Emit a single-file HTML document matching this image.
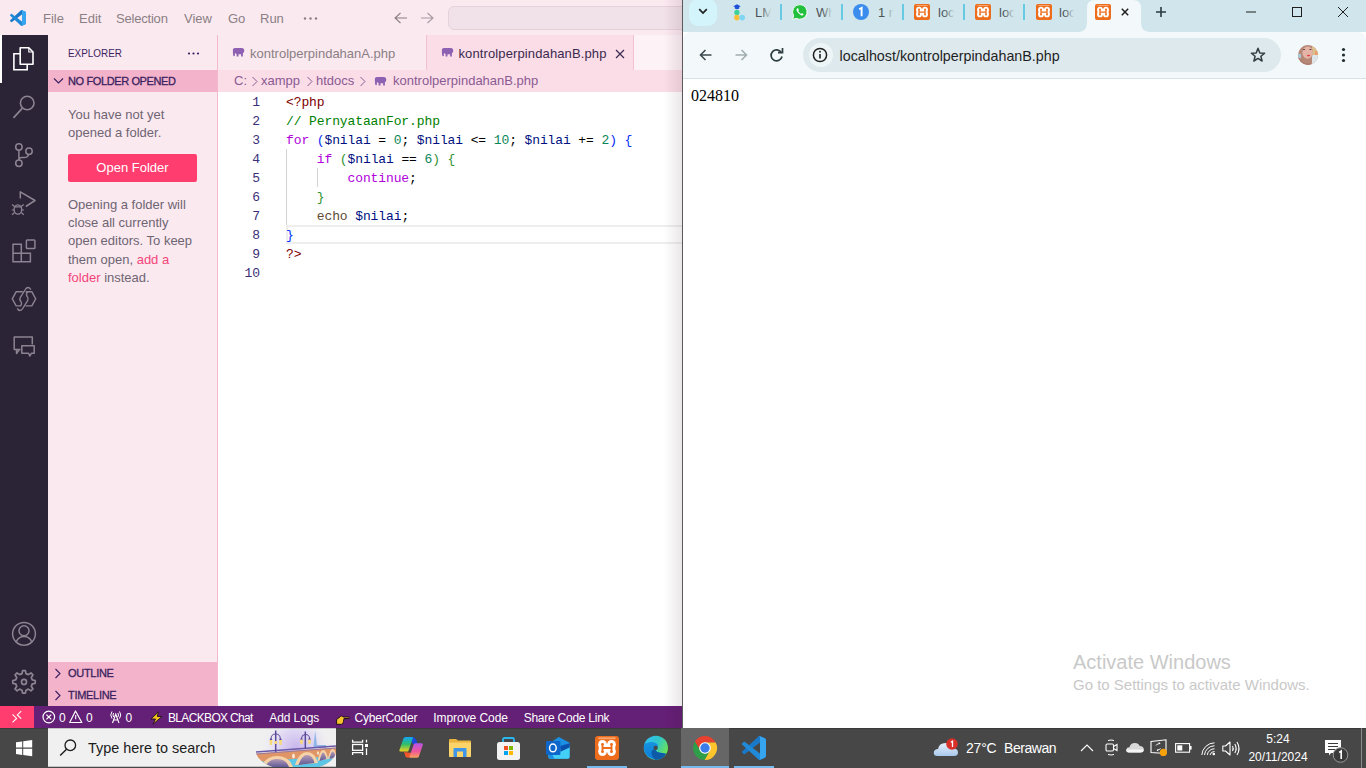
<!DOCTYPE html>
<html><head><meta charset="utf-8">
<style>
*{margin:0;padding:0;box-sizing:border-box}
html,body{width:1366px;height:768px;overflow:hidden;background:#fff;font-family:"Liberation Sans",sans-serif}
.a{position:absolute}
svg{position:absolute;overflow:visible}
/* VS Code */
#vs{position:absolute;left:0;top:0;width:682px;height:728px;background:#fbe9f0;overflow:hidden}
.menu{top:10px;font-size:13px;color:#8a7f84;line-height:17px;white-space:nowrap}
#act{left:0;top:35px;width:48px;height:671px;background:#2b2336}
#side{left:48px;top:35px;width:170px;height:671px;background:#fbe9f0;border-right:1px solid #f3b8cd}
.sechdr{background:#f2b3cb;height:22px;font-size:11px;font-weight:normal;-webkit-text-stroke:0.3px #3b1f5e;color:#3b1f5e;line-height:23px;white-space:nowrap;letter-spacing:-0.3px}
.sb{margin-top:1px;font-size:13px;color:#6e6573;line-height:18.2px;white-space:nowrap}
.pk{color:#f4457a}
#tabs{left:218px;top:35px;width:464px;height:35px;background:#fbe9f0}
#crumb{left:218px;top:70px;width:464px;height:22px;background:#fadde7;font-size:13px;color:#8b5a93;line-height:22px;white-space:nowrap}
#editor{left:218px;top:92px;width:464px;height:614px;background:#fff}
.ln{position:absolute;margin-top:0.8px;left:0;width:42px;text-align:right;font-family:"Liberation Mono",monospace;font-size:13px;line-height:19px;color:#3a2f78;letter-spacing:-0.1px}
.cl{position:absolute;margin-top:0.8px;left:68px;font-family:"Liberation Mono",monospace;font-size:13px;line-height:19px;white-space:pre;color:#000;letter-spacing:-0.11px}
.k{color:#af00db}.c{color:#008000}.t{color:#800000}.v{color:#001080}.n{color:#098658}.b1{color:#0431fa}.b2{color:#319331}.e{color:#5e4b33}
.st{top:1px;font-size:12px;line-height:22px;color:#fff;white-space:nowrap}
#status{left:0;top:706px;width:682px;height:22px;background:#641f76;color:#fff;font-size:12px;line-height:22px;white-space:nowrap}
/* Chrome */
#ch{position:absolute;left:682px;top:0;width:684px;height:728px;background:#fff;overflow:hidden}
#strip{left:0;top:0;width:684px;height:32px;background:#d0e6ec}
#tool{left:1px;top:32px;width:683px;height:47px;background:#f3f9fb;border-bottom:1px solid #d6e2e6;border-radius:8px 8px 0 0}
.fd{top:3px;width:14px;height:18px;background:linear-gradient(90deg,rgba(208,230,236,0),#d0e6ec 75%)}
.sep{top:4px;width:2px;height:16px;background:#66cbe2}
.tt{top:5px;font-size:13px;line-height:15px;color:#4b5256;white-space:nowrap}
#omni{left:120px;top:6px;width:478px;height:34px;border-radius:17px;background:#dde9ed}
/* Taskbar */
#tb{left:0;top:728px;width:1366px;height:40px;background:#474747}
</style></head><body>
<div id="vs">
  <!-- title bar -->
  <svg style="left:10px;top:10px" width="16" height="16" viewBox="0 0 100 100"><path d="M96.46 10.8 L75.86 0.87 C73.48 -0.28 70.63 0.2 68.76 2.07 L1.33 63.55 C-0.48 65.2 -0.48 68.06 1.33 69.71 L6.84 74.72 C8.33 76.07 10.56 76.17 12.16 74.96 L93.38 13.35 C96.1 11.28 100 13.23 100 16.65 V16.41 C100 14 98.62 11.84 96.46 10.8 Z" fill="#1a78c8"/><path d="M96.46 89.2 L75.86 99.13 C73.48 100.28 70.63 99.8 68.76 97.93 L1.33 36.45 C-0.48 34.8 -0.48 31.94 1.33 30.29 L6.84 25.28 C8.33 23.93 10.56 23.83 12.16 25.04 L93.38 86.65 C96.1 88.72 100 86.77 100 83.35 V83.59 C100 86 98.62 88.16 96.46 89.2 Z" fill="#208ad8"/><path d="M75.86 99.13 C73.48 100.28 70.63 99.8 68.76 97.93 C71.07 100.24 75 98.6 75 95.34 V4.66 C75 1.4 71.07 -0.24 68.76 2.07 C70.63 0.2 73.48 -0.28 75.86 0.87 L96.46 10.79 C98.62 11.83 100 14 100 16.41 V83.59 C100 86 98.62 88.17 96.46 89.21 Z" fill="#35a5f0"/></svg>
  <div class="a menu" style="left:43px">File</div>
  <div class="a menu" style="left:79px">Edit</div>
  <div class="a menu" style="left:116px;letter-spacing:-0.2px">Selection</div>
  <div class="a menu" style="left:184px">View</div>
  <div class="a menu" style="left:228px">Go</div>
  <div class="a menu" style="left:260px">Run</div>
  <svg style="left:303px;top:17px" width="16" height="3"><circle cx="2" cy="1.5" r="1.2" fill="#8a7f84"/><circle cx="7.5" cy="1.5" r="1.2" fill="#8a7f84"/><circle cx="13" cy="1.5" r="1.2" fill="#8a7f84"/></svg>
  <svg style="left:394px;top:12px" width="14" height="12"><path d="M1 6 H13 M6.5 1 L1 6 L6.5 11" stroke="#8a7f84" stroke-width="1.1" fill="none"/></svg>
  <svg style="left:420px;top:12px" width="14" height="12"><path d="M1 6 H13 M7.5 1 L13 6 L7.5 11" stroke="#a59aa0" stroke-width="1.1" fill="none"/></svg>
  <div class="a" style="left:448px;top:6px;width:260px;height:24px;border-radius:6px;background:#f1e1e8;border:1px solid #e6d2da"></div>

  <!-- activity bar -->
  <div id="act" class="a">
    <div class="a" style="left:0;top:0;width:2px;height:48px;background:#fff"></div>
    <svg style="left:0;top:-35px" width="48" height="706" viewBox="0 0 48 706">
      <g fill="none" stroke="#8c8491" stroke-width="1.5">
      <path d="M20.2 53.8 H13.9 V69.8 H27.2 V64.2" stroke="#fff" stroke-width="1.6"/>
      <path d="M20.2 47.8 H28.8 L33 52 V64.2 H20.2 Z" stroke="#fff" stroke-width="1.6" stroke-linejoin="round"/>
      <path d="M28.8 47.8 V52 H33" stroke="#fff" stroke-width="1.1"/>
      <circle cx="27.2" cy="103" r="6.8" stroke-width="1.6"/>
      <path d="M22.4 108.2 L13.5 117.8" stroke-width="1.7"/>
      <circle cx="18.9" cy="147" r="3.2"/>
      <circle cx="18.9" cy="163.2" r="3.2"/>
      <circle cx="29" cy="151.2" r="3.2"/>
      <path d="M18.9 150.2 V160 M28.6 154.4 Q28 157.6 24 157.6 H22 Q18.9 157.6 18.9 159.6"/>
      <path d="M20.3 198.5 V191.8 L35 200.5 L25.8 206.5" stroke-linejoin="round"/>
      <ellipse cx="17.9" cy="209.5" rx="3.8" ry="4.6" stroke-width="1.4"/>
      <path d="M14 206.8 H21.8 M12 204.5 L14.3 206.3 M23.8 204.5 L21.5 206.3 M11.8 210 H14 M21.8 210 H24 M12 214.8 L14.3 212.8 M23.8 214.8 L21.5 212.8" stroke-width="1.2"/>
      <path d="M13 244.3 H21.3 V253.2 H30.4 V261.8 H13 Z M21.3 253.2 V261.8 M13 253.2 H21.3"/>
      <rect x="26.4" y="240" width="8.5" height="8.5" rx="0.8"/>
      <path d="M22.8 291.7 H16.2 L12.3 298.9 L16.2 305.9 H20.2 M25.6 291.7 H31.8 L35.7 298.9 L31.8 305.9 H25.4" stroke-width="1.4" stroke-linejoin="round"/>
      <path d="M30.8 289.6 C29.5 286.8 26.8 286.8 25.3 289.5 L20.2 297.6 C19.4 299 19.7 300 20.9 301.6 C22 303.2 21.6 305.2 20 306.2 M17.3 308.4 C18.6 311.2 21.2 311.2 22.7 308.5 L27.8 300.3 C28.6 299 28.3 298 27.1 296.4 C26 294.8 26.4 292.6 28 291.6" stroke-width="1.4"/>
      <path d="M20.5 349.5 H14.2 V337 H32.3 V344.5 M16.5 349.5 V353.5 L19.5 349.5" stroke-linejoin="round"/>
      <path d="M21.8 345.8 H34.2 V353.2 H31.5 L29.8 356 L28.6 353.2 H21.8 Z" stroke-linejoin="round"/>
      <circle cx="24" cy="633.8" r="11.4"/>
      <circle cx="24" cy="630.8" r="5"/>
      <path d="M16.2 642 Q18.5 636.6 24 636.6 Q29.5 636.6 31.8 642"/>
      <path d="M22.02 673.63 L22.58 670.69 L25.42 670.69 L25.98 673.63 L28.44 674.65 L30.93 672.97 L32.93 674.97 L31.25 677.46 L32.27 679.92 L35.21 680.48 L35.21 683.32 L32.27 683.88 L31.25 686.34 L32.93 688.83 L30.93 690.83 L28.44 689.15 L25.98 690.17 L25.42 693.11 L22.58 693.11 L22.02 690.17 L19.56 689.15 L17.07 690.83 L15.07 688.83 L16.75 686.34 L15.73 683.88 L12.79 683.32 L12.79 680.48 L15.73 679.92 L16.75 677.46 L15.07 674.97 L17.07 672.97 L19.56 674.65 Z" stroke-linejoin="round" stroke-width="1.7"/>
      <circle cx="24" cy="681.9" r="2.5" stroke-width="1.7"/>
      </g>
    </svg>
  </div>

  <!-- sidebar -->
  <div id="side" class="a">
    <div class="a" style="left:20px;top:11px;font-size:11px;line-height:14px;color:#3b1f5e;transform:scaleX(0.9);transform-origin:0 0">EXPLORER</div>
    <svg style="left:139px;top:17px" width="14" height="3"><circle cx="2" cy="1.5" r="1.1" fill="#3b1f5e"/><circle cx="6.5" cy="1.5" r="1.1" fill="#3b1f5e"/><circle cx="11" cy="1.5" r="1.1" fill="#3b1f5e"/></svg>
    <div class="a sechdr" style="left:0;top:35px;width:169px;padding-left:20px;letter-spacing:-0.38px">NO FOLDER OPENED</div>
    <svg style="left:5px;top:42px" width="12" height="8"><path d="M1 1.5 L5.5 6 L10 1.5" stroke="#3b1f5e" stroke-width="1.1" fill="none"/></svg>
    <div class="a sb" style="left:20px;top:70px">You have not yet<br>opened a folder.</div>
    <div class="a" style="left:20px;top:119px;width:129px;height:28px;background:#ff3e6f;border-radius:2px;color:#fff;font-size:13px;line-height:28px;text-align:center">Open Folder</div>
    <div class="a sb" style="left:20px;top:160px">Opening a folder will<br>close all currently<br>open editors. To keep<br>them open, <span class="pk">add a</span><br><span class="pk">folder</span> instead.</div>
    <div class="a sechdr" style="left:0;top:627px;width:169px;padding-left:20px">OUTLINE</div>
    <svg style="left:6px;top:633px" width="8" height="12"><path d="M1.5 1 L6 5.5 L1.5 10" stroke="#3b1f5e" stroke-width="1.1" fill="none"/></svg>
    <div class="a sechdr" style="left:0;top:649px;width:169px;padding-left:20px">TIMELINE</div>
    <svg style="left:6px;top:655px" width="8" height="12"><path d="M1.5 1 L6 5.5 L1.5 10" stroke="#3b1f5e" stroke-width="1.1" fill="none"/></svg>
  </div>

  <!-- tabs -->
  <div id="tabs" class="a">
    <svg style="left:14px;top:12.5px" width="13" height="9" viewBox="0 0 12.4 9"><path id="ele" d="M0.6 1.2 Q1.2 0 3.2 0 H9.8 Q12 0.3 12 2.6 Q12 4.6 10.6 5.3 V8.6 H8.8 V6.2 H6.2 V8.6 H4.3 V5.9 Q3.2 5.7 2.6 5 V7.7 Q2 8.4 1.1 8 Q0.6 6.3 0.6 4.5 Z" fill="#8e60b2"/></svg>
    <div class="a" style="left:32px;top:10px;font-size:13px;line-height:17px;color:#8a7f84;white-space:nowrap">kontrolperpindahanA.php</div>
    <div class="a" style="left:208px;top:0;width:1px;height:35px;background:#f3c0d2"></div>
    <div class="a" style="left:209px;top:0;width:207px;height:35px;background:#fadde7;border-right:1px solid #f3c0d2"></div>
    <svg style="left:223px;top:12.5px" width="13" height="9" viewBox="0 0 12.4 9"><use href="#ele"/></svg>
    <div class="a" style="left:240.5px;top:10px;font-size:13px;line-height:17px;color:#3b2a4f;white-space:nowrap;letter-spacing:0.12px">kontrolperpindahanB.php</div>
    <svg style="left:397px;top:14px" width="10" height="10"><path d="M1 1 L9 9 M9 1 L1 9" stroke="#3b2a4f" stroke-width="1.2"/></svg>
    <div class="a" style="left:416px;top:0;width:48px;height:35px;background:#fdf2f6"></div>
  </div>
  <!-- breadcrumb -->
  <div id="crumb" class="a">
    <div class="a" style="left:16px;top:0">C:</div>
    <svg style="left:32.5px;top:6px" width="8" height="11"><path d="M1.5 1 L6 5.5 L1.5 10" stroke="#8b5a93" stroke-width="1" fill="none"/></svg>
    <div class="a" style="left:43px;top:0">xampp</div>
    <svg style="left:88px;top:6px" width="8" height="11"><path d="M1.5 1 L6 5.5 L1.5 10" stroke="#8b5a93" stroke-width="1" fill="none"/></svg>
    <div class="a" style="left:98px;top:0">htdocs</div>
    <svg style="left:140.5px;top:6px" width="8" height="11"><path d="M1.5 1 L6 5.5 L1.5 10" stroke="#8b5a93" stroke-width="1" fill="none"/></svg>
    <svg style="left:156.3px;top:6.6px" width="13" height="9" viewBox="0 0 12.4 9"><use href="#ele"/></svg>
    <div class="a" style="left:175px;top:0">kontrolperpindahanB.php</div>
  </div>
  <!-- editor -->
  <div id="editor" class="a">
    <div class="a" style="left:68px;top:133px;width:400px;height:19px;border:2px solid #eeeeee"></div>
    <div class="a" style="left:68px;top:57px;width:1px;height:76px;background:#d3d3d3"></div>
    <div class="a" style="left:99px;top:76px;width:1px;height:19px;background:#d3d3d3"></div>
    <div class="ln" style="top:0">1</div>
    <div class="ln" style="top:19px">2</div>
    <div class="ln" style="top:38px">3</div>
    <div class="ln" style="top:57px">4</div>
    <div class="ln" style="top:76px">5</div>
    <div class="ln" style="top:95px">6</div>
    <div class="ln" style="top:114px">7</div>
    <div class="ln" style="top:133px">8</div>
    <div class="ln" style="top:152px">9</div>
    <div class="ln" style="top:171px">10</div>
    <div class="cl" style="top:0"><span class="t">&lt;?php</span></div>
    <div class="cl" style="top:19px"><span class="c">// PernyataanFor.php</span></div>
    <div class="cl" style="top:38px"><span class="k">for</span> <span class="b1">(</span><span class="v">$nilai</span> = <span class="n">0</span>; <span class="v">$nilai</span> &lt;= <span class="n">10</span>; <span class="v">$nilai</span> += <span class="n">2</span><span class="b1">)</span> <span class="b1">{</span></div>
    <div class="cl" style="top:57px">    <span class="k">if</span> <span class="b2">(</span><span class="v">$nilai</span> == <span class="n">6</span><span class="b2">)</span> <span class="b2">{</span></div>
    <div class="cl" style="top:76px">        <span class="k">continue</span>;</div>
    <div class="cl" style="top:95px">    <span class="b2">}</span></div>
    <div class="cl" style="top:114px">    <span class="e">echo</span> <span class="v">$nilai</span>;</div>
    <div class="cl" style="top:133px"><span class="b1">}</span></div>
    <div class="cl" style="top:152px"><span class="t">?&gt;</span></div>
  </div>
  <!-- status bar -->
  <div id="status" class="a">
    <div class="a" style="left:0;top:0;width:34px;height:22px;background:#ff3d6e"></div>
    <svg style="left:0;top:0" width="34" height="22"><path d="M12.5 8.3 L16.6 12.4 L12.5 16.4 M21.25 5.2 L17.3 8.9 L21.25 12.7" stroke="#fff" stroke-width="1.1" fill="none"/></svg>
    <svg style="left:42px;top:4px" width="14" height="14"><circle cx="6.8" cy="7" r="5.8" stroke="#fff" stroke-width="1.2" fill="none"/><path d="M4.4 4.6 L9.2 9.4 M9.2 4.6 L4.4 9.4" stroke="#fff" stroke-width="1.2"/></svg>
    <div class="a st" style="left:59px">0</div>
    <svg style="left:69px;top:4px" width="14" height="14"><path d="M6.5 1 L12.8 12.5 H0.7 Z" stroke="#fff" stroke-width="1.2" fill="none" stroke-linejoin="round"/><path d="M6.7 5 V9.3" stroke="#fff" stroke-width="1.1"/></svg>
    <div class="a st" style="left:86px">0</div>
    <svg style="left:109px;top:4px" width="14" height="14"><path d="M3 1.5 Q0.5 5 3 8.5 M10.5 1.5 Q13 5 10.5 8.5 M4.6 3 Q3.4 5 4.6 7 M8.9 3 Q10.1 5 8.9 7" stroke="#fff" stroke-width="1" fill="none"/><path d="M3.5 13 L6.75 4.2 L10 13 M4.7 10 H8.8" stroke="#fff" stroke-width="1.1" fill="none"/></svg>
    <div class="a st" style="left:125.5px">0</div>
    <svg style="left:149px;top:5px" width="15" height="14" viewBox="0 0 15 14"><path d="M9.5 0.8 L2 8 H6.5 L4 13.2 L13 5.5 H8.3 Z" fill="#f6c31c" stroke="#1a1020" stroke-width="0.9" stroke-linejoin="round"/></svg>
    <div class="a st" style="left:168px;letter-spacing:-0.66px">BLACKBOX Chat</div>
    <div class="a st" style="left:269.3px;letter-spacing:-0.1px">Add Logs</div>
    <svg style="left:336px;top:9px" width="14" height="10" viewBox="0 0 14 10"><path d="M0.6 4.5 L4.5 1.5 Q5.5 0.5 6.5 1.3 L7 2 H13 Q13.6 2.5 13 3.5 H8 L7.5 6.5 Q7 9.5 5.5 9.3 H0.6 Z" fill="#f7c22e" stroke="#120818" stroke-width="0.9" stroke-linejoin="round"/></svg>
    <div class="a st" style="left:354.5px;letter-spacing:-0.2px">CyberCoder</div>
    <div class="a st" style="left:433.3px;letter-spacing:-0.06px">Improve Code</div>
    <div class="a st" style="left:523.7px;letter-spacing:-0.25px">Share Code Link</div>
  </div>
</div>

<div class="a" style="left:664px;top:0;width:18px;height:728px;background:linear-gradient(90deg,rgba(60,20,40,0),rgba(60,20,40,0.10));z-index:5"></div>
<div id="ch">
  <div id="strip" class="a"></div>
  <!-- dropdown -->
  <div class="a" style="left:7px;top:-1px;width:28px;height:27px;border-radius:9px;background:#d3f4fb"></div>
  <svg style="left:16px;top:8px" width="10" height="7"><path d="M1.2 1.2 L5 5 L8.8 1.2" stroke="#1f1f1f" stroke-width="1.7" fill="none"/></svg>
  <!-- tab separators -->
  <div class="a sep" style="left:98px"></div>
  <div class="a sep" style="left:159px"></div>
  <div class="a sep" style="left:220px"></div>
  <div class="a sep" style="left:281px"></div>
  <div class="a sep" style="left:341px"></div>
  <!-- LMS icon -->
  <svg style="left:51px;top:4px" width="16" height="16" viewBox="0 0 16 16">
    <path d="M0.3 2.2 L4 0.3 L7.7 2.2 L4 4 Z" fill="#1e4fd8"/><path d="M1.8 3 V4.6 Q4 5.8 6.2 4.6 V3" fill="#1e4fd8"/>
    <circle cx="3.9" cy="8.4" r="2.6" fill="#3fd19a"/>
    <circle cx="3.9" cy="13.6" r="2.8" fill="#fbbf3c"/>
    <circle cx="9.2" cy="13.6" r="2.8" fill="#7fd6f2"/>
  </svg>
  <div class="a tt" style="left:73px">LM</div>
  <!-- WhatsApp -->
  <svg style="left:110px;top:4px" width="16" height="16" viewBox="0 0 16 16">
    <path d="M8 0.6 A7.3 7.3 0 1 1 4.3 14.3 L0.6 15.4 L1.7 11.8 A7.3 7.3 0 0 1 8 0.6 Z" fill="#22c03c" stroke="#fff" stroke-width="0.9"/>
    <path d="M5.2 4.2 Q4.2 5 4.6 6.6 Q5.6 9.6 9 11.2 Q10.6 11.8 11.4 10.8 L11.5 9.9 L9.9 9.1 L9.1 9.9 Q7.3 9.2 6.2 7.1 L6.9 6.2 L6.1 4.3 Z" fill="#fff"/>
  </svg>
  <div class="a tt" style="left:134px">Wh</div>
  <!-- 1 -->
  <svg style="left:171px;top:4px" width="16" height="16" viewBox="0 0 16 16"><circle cx="8" cy="8" r="8" fill="#3b8ded"/><path d="M6.2 5.2 L8.6 3.8 V12.2" stroke="#fff" stroke-width="1.9" fill="none"/></svg>
  <div class="a tt" style="left:196px">1 r</div>
  <!-- xampp x3 -->
  <svg class="xa" style="left:232px;top:4px" width="16" height="16" viewBox="0 0 16 16"><use href="#xmp"/></svg>
  <div class="a tt" style="left:256px">loc</div>
  <svg class="xa" style="left:293px;top:4px" width="16" height="16" viewBox="0 0 16 16"><use href="#xmp"/></svg>
  <div class="a tt" style="left:317px">loc</div>
  <svg class="xa" style="left:354px;top:4px" width="16" height="16" viewBox="0 0 16 16"><use href="#xmp"/></svg>
  <div class="a tt" style="left:377px">loc</div>
  <div class="a fd" style="left:79px"></div><div class="a fd" style="left:140px"></div><div class="a fd" style="left:201px"></div><div class="a fd" style="left:262px"></div><div class="a fd" style="left:322px"></div><div class="a fd" style="left:382px"></div>
  <!-- active tab -->
  <svg style="left:396px;top:0" width="72" height="32" viewBox="0 0 72 32">
    <path d="M0 32 Q8 32 9 24 V8 Q9 0 17 0 H55 Q63 0 63 8 V24 Q64 32 72 32 Z" fill="#f3f9fb"/>
  </svg>
  <svg style="left:413px;top:4px" width="16" height="16" viewBox="0 0 16 16">
    <defs><g id="xmp"><rect x="0" y="0" width="16" height="16" rx="2" fill="#ee6d1c"/><rect x="2.2" y="0.9" width="11.6" height="1.2" rx="0.6" fill="#f7a46e"/><g fill="#fff"><circle cx="5" cy="5.6" r="2.9"/><circle cx="11" cy="5.6" r="2.9"/><circle cx="5" cy="10.4" r="2.9"/><circle cx="11" cy="10.4" r="2.9"/><rect x="2.5" y="5.6" width="11" height="4.8"/><rect x="5" y="5.1" width="6" height="5.8"/></g><path d="M5 5.5 V10.5 M11 5.5 V10.5 M5 8 H11" stroke="#ee6d1c" stroke-width="1.25" stroke-linecap="round" fill="none"/><circle cx="5" cy="5.5" r="0.9" fill="#ee6d1c"/><circle cx="11" cy="5.5" r="0.9" fill="#ee6d1c"/><circle cx="5" cy="10.5" r="0.9" fill="#ee6d1c"/><circle cx="11" cy="10.5" r="0.9" fill="#ee6d1c"/></g></defs>
    <use href="#xmp"/>
  </svg>
  <svg style="left:439px;top:8px" width="8" height="8"><path d="M0.8 0.8 L7.2 7.2 M7.2 0.8 L0.8 7.2" stroke="#1f1f1f" stroke-width="1.5"/></svg>
  <svg style="left:473px;top:6px" width="12" height="12"><path d="M6 1 V11 M1 6 H11" stroke="#2a3b40" stroke-width="1.6"/></svg>
  <!-- window controls -->
  <svg style="left:563px;top:11px" width="12" height="2"><path d="M1 1 H11" stroke="#1f1f1f" stroke-width="1"/></svg>
  <svg style="left:609px;top:6px" width="12" height="12"><rect x="1.5" y="1.5" width="9" height="9" stroke="#1f1f1f" stroke-width="1" fill="none"/></svg>
  <svg style="left:655px;top:6px" width="12" height="12"><path d="M1 1 L11 11 M11 1 L1 11" stroke="#1f1f1f" stroke-width="1"/></svg>
  <!-- toolbar -->
  <div id="tool" class="a">
    <div id="omni" class="a"></div>
    <div class="a" style="left:126px;top:11px;width:24px;height:24px;border-radius:12px;background:#eef5f7"></div>
  </div>
  <svg style="left:17px;top:49px" width="13" height="12"><path d="M12.5 6 H1.5 M6.5 1 L1.5 6 L6.5 11" stroke="#3c4a4f" stroke-width="1.6" fill="none"/></svg>
  <svg style="left:53px;top:49px" width="13" height="12"><path d="M0.5 6 H11.5 M6.5 1 L11.5 6 L6.5 11" stroke="#a2adb1" stroke-width="1.6" fill="none"/></svg>
  <svg style="left:88px;top:48px" width="14" height="14"><path d="M11.3 4.5 A5.5 5.5 0 1 0 12 8.5" stroke="#2d3d42" stroke-width="1.7" fill="none"/><path d="M8 3.6 H12.5 V-0.9" stroke="#2d3d42" stroke-width="1.7" fill="none" transform="translate(0,1)"/></svg>
  <svg style="left:130px;top:47px" width="16" height="16"><circle cx="8" cy="8" r="6.6" stroke="#1f1f1f" stroke-width="1.5" fill="none"/><path d="M8 7 V11.5" stroke="#1f1f1f" stroke-width="1.6"/><circle cx="8" cy="4.8" r="0.95" fill="#1f1f1f"/></svg>
  <div class="a" style="left:157.5px;top:46.8px;font-size:14.3px;line-height:18px;color:#1f1f1f;white-space:nowrap">localhost/kontrolperpindahanB.php</div>
  <svg style="left:568px;top:47px" width="16" height="16" viewBox="0 0 16 16"><path d="M8 1.3 L9.8 5.9 L14.6 6.2 L10.9 9.3 L12.1 14 L8 11.4 L3.9 14 L5.1 9.3 L1.4 6.2 L6.2 5.9 Z" stroke="#333d40" stroke-width="1.5" fill="none" stroke-linejoin="round"/></svg>
  <svg style="left:616px;top:44.8px" width="20" height="20" viewBox="0 0 20 20">
    <defs><clipPath id="av"><circle cx="10" cy="10" r="10"/></clipPath></defs>
    <g clip-path="url(#av)"><rect width="20" height="20" fill="#b98b7b"/><rect x="14" y="0" width="6" height="10" fill="#dcc08c"/><rect x="14" y="10" width="6" height="10" fill="#dde6ea"/><rect x="17" y="6" width="3" height="4" fill="#e9a070"/><path d="M0 9 H4 V13 H0 Z" fill="#a9c6d6"/><path d="M3 6 Q3 0 10 0.5 Q15 1 14.5 8 Q14 16 12 19 Q6 20 3 16 Z" fill="#b48776"/><ellipse cx="9.6" cy="7.6" rx="5.2" ry="6.2" fill="#e5b4a6"/><ellipse cx="6" cy="4.5" rx="1.2" ry="0.6" fill="#5a3a3a"/><ellipse cx="12.4" cy="4.5" rx="1.2" ry="0.6" fill="#5a3a3a"/><ellipse cx="10.6" cy="10.6" rx="1.8" ry="0.8" fill="#e0454a"/><path d="M2 14 Q6 20 12 18 L14 20 H0 V12 Z" fill="#a87a6a"/></g>
  </svg>
  <svg style="left:659px;top:47px" width="5" height="16"><circle cx="2.5" cy="2.5" r="1.6" fill="#1f2d33"/><circle cx="2.5" cy="8" r="1.6" fill="#1f2d33"/><circle cx="2.5" cy="13.5" r="1.6" fill="#1f2d33"/></svg>
  <div class="a" style="left:9px;top:86px;font-family:'Liberation Serif',serif;font-size:16px;line-height:19px;color:#000">024810</div>
  <div class="a" style="left:391px;top:649px;font-size:20px;line-height:26px;color:#c9c9c9;white-space:nowrap">Activate Windows</div>
  <div class="a" style="left:391px;top:675px;font-size:15px;line-height:19px;color:#c9c9c9;white-space:nowrap">Go to Settings to activate Windows.</div>
  <div class="a" style="left:0;top:0;width:1px;height:728px;background:#5b5b5b"></div>
</div>
<div id="tb" class="a">
  <div class="a" style="left:0;top:0;width:1366px;height:1px;background:#3a3a3a"></div>
  <!-- start -->
  <svg style="left:16px;top:12px" width="17" height="17" viewBox="0 0 17 17">
    <path d="M0 2.3 L6.2 1.4 V7.6 H0 Z M7.2 1.25 L16.2 0 V7.6 H7.2 Z M0 8.7 H6.2 V14.9 L0 14 Z M7.2 8.7 H16.2 V16.2 L7.2 15 Z" fill="#fff"/>
  </svg>
  <!-- search box -->
  <div class="a" style="left:48px;top:0;width:288px;height:39px;background:#f0f0f0;border-top:1px solid #c4c4c4;border-bottom:1px solid #c4c4c4"></div>
  <svg style="left:59px;top:10px" width="18" height="19"><circle cx="11.3" cy="7.3" r="5.3" stroke="#1b1b1b" stroke-width="1.3" fill="none"/><path d="M7.5 11.2 L1.2 17.5" stroke="#1b1b1b" stroke-width="1.4"/></svg>
  <div class="a" style="left:88px;top:11px;font-size:14.4px;line-height:18px;color:#1b1b1b;white-space:nowrap">Type here to search</div>
  <!-- bridge -->
  <svg style="left:256px;top:1px" width="80" height="38" viewBox="0 0 80 38">
    <defs>
      <radialGradient id="sky" cx="40" cy="19" r="36" gradientUnits="userSpaceOnUse"><stop offset="0" stop-color="#c8b6ec"/><stop offset="0.55" stop-color="#e2daf4"/><stop offset="1" stop-color="#f0f0f0" stop-opacity="0"/></radialGradient>
      <linearGradient id="arch" x1="0" y1="0" x2="0" y2="1"><stop offset="0" stop-color="#b69bb4"/><stop offset="1" stop-color="#5f5a98"/></linearGradient>
      <clipPath id="bcl"><path d="M-1 -1 H81 V20 A41 22 0 0 1 -1 20 Z"/></clipPath>
    </defs>
    <g clip-path="url(#bcl)">
      <rect x="0" y="0" width="80" height="38" fill="url(#sky)"/>
      <path d="M57.5 16 L59.2 1.5 L61 16 H70 V19 H57.5 Z" fill="#93b6ea"/>
      <path d="M0 24.5 L80 18.5 V38 H0 Z" fill="#df9565"/>
      <path d="M0 38 V33 Q20 31 80 27 V38 Z" fill="#5cc6e6"/>
      <path d="M5 38 Q10 27 21 27 Q33 27 37 38 Z" fill="#f5d2a8"/>
      <path d="M9 38 Q13 30 21 30 Q30 30 33 38 Z" fill="url(#arch)"/>
      <path d="M39 36 Q43 23 51 23 Q59 23 62 34 Z" fill="#f5d2a8"/>
      <path d="M42.5 36 Q46 26 51 26 Q56.5 26 58.5 34 Z" fill="url(#arch)"/>
      <path d="M61.5 32 Q64 21 67 21 Q70.5 21 72 30 Z" fill="#f5d2a8"/>
      <path d="M63.5 32 Q65.5 23.5 67 23.5 Q69 23.5 70.3 30 Z" fill="url(#arch)"/>
      <path d="M72 30 Q74 20 76.5 20 Q79 20 80 26 V29 Z" fill="#f5d2a8"/>
      <path d="M73.5 30 Q75 22.5 76.5 22.5 Q78.5 22.5 79.5 28 Z" fill="url(#arch)"/>
      <ellipse cx="37.5" cy="27" rx="1.4" ry="2.5" fill="#fbe8d4"/>
      <ellipse cx="62" cy="24" rx="1" ry="1.8" fill="#fbe8d4"/>
      <path d="M0 23 L80 17" stroke="#6a58a8" stroke-width="1.4"/>
      <path d="M0 25 L80 19" stroke="#7c6bb5" stroke-width="0.7"/>
      <path d="M19.7 23 V1.5 M49.3 19.5 V2.5" stroke="#5b4a9a" stroke-width="1.5"/>
      <path d="M15 10 Q15 5 19.7 5 Q24.3 5 24.3 10 M45.5 9.5 Q45.5 5.5 49.3 5.5 Q53.5 5.5 53.5 9.5" stroke="#5b4a9a" stroke-width="1" fill="none"/>
      <path d="M13.5 11 H16.5 L16 16 H14 Z M23 11 H26 L25.5 16 H23.5 Z M44 10.5 H47 L46.5 15 H44.5 Z M52 10.5 H55 L54.5 15 H52.5 Z" fill="#f7d875"/>
      <path d="M13.5 11 L15 9 L16.5 11 M23 11 L24.5 9 L26 11 M44 10.5 L45.5 8.5 L47 10.5 M52 10.5 L53.5 8.5 L55 10.5" fill="#5b4a9a"/>
      <rect x="18.5" y="12" width="2.4" height="3" fill="#f7d875"/>
    </g>
  </svg>
  <!-- task view -->
  <svg style="left:346px;top:8px" width="28" height="24" viewBox="0 0 28 24"><g stroke="#fff" stroke-width="1.3" fill="none"><path d="M6.6 3.8 V6.2 H16.6 V3.8 M6.6 19 V16.7 H16.6 V19 M20.5 3.8 V6.6 M20.5 12.2 V19"/><rect x="6.6" y="8.5" width="10" height="5.8"/></g><rect x="19" y="8" width="3" height="3" fill="#fff"/></svg>
  <!-- copilot -->
  <svg style="left:394px;top:4px" width="34" height="32" viewBox="0 0 34 32">
    <defs>
      <linearGradient id="cp1" x1="0" y1="0" x2="0" y2="1"><stop offset="0" stop-color="#12a6f5"/><stop offset="0.5" stop-color="#2fbf6a"/><stop offset="1" stop-color="#f8d21a"/></linearGradient>
      <linearGradient id="cp2" x1="0" y1="0" x2="0" y2="1"><stop offset="0" stop-color="#b455e8"/><stop offset="0.55" stop-color="#f0569a"/><stop offset="1" stop-color="#f9a25a"/></linearGradient>
    </defs>
    <path d="M17 5 Q21.5 4.8 22.8 9 L23.8 12 H18.5 Z" fill="#1d48d8"/>
    <path d="M10 20 L11.5 24.5 Q12.5 26 15.5 25.8 L17.5 21 Z" fill="#f2572a"/>
    <path d="M11.8 5 H17.8 Q19.2 5 18.8 6.4 L14.6 18.4 Q14.2 19.6 12.8 19.6 H6.6 Q5 19.6 5.4 18 L9.4 6.6 Q9.9 5 11.8 5 Z" fill="url(#cp1)"/>
    <path d="M22.4 11.3 H27.6 Q29.2 11.3 28.8 12.9 L24.9 24.4 Q24.4 25.8 22.8 25.8 H16.6 Q15 25.8 15.5 24.2 L19.7 12.6 Q20.2 11.3 22.4 11.3 Z" fill="url(#cp2)"/>
  </svg>
  <!-- explorer -->
  <svg style="left:449px;top:11px" width="22" height="18" viewBox="0 0 22 18">
    <path d="M0 1 Q0 0 1 0 H7 L9 1.5 H21 Q22 1.5 22 2.5 V17 Q22 18 21 18 H1 Q0 18 0 17 Z" fill="#e9b33c"/>
    <path d="M0 3.5 H22 V17 Q22 18 21 18 H1 Q0 18 0 17 Z" fill="#fcd46a"/>
    <path d="M4.5 18 V10 Q4.5 9 5.5 9 H16.5 Q17.5 9 17.5 10 V18 H14 V12.5 H8 V18 Z" fill="#3f95e8"/>
  </svg>
  <!-- store -->
  <svg style="left:497px;top:9px" width="23" height="23" viewBox="0 0 23 23">
    <path d="M6 6 V2.5 Q6 1 7.5 1 H15.5 Q17 1 17 2.5 V6" stroke="#2ab8f0" stroke-width="1.8" fill="none"/>
    <rect x="0" y="5" width="23" height="18" rx="2.5" fill="#f3f3f3"/>
    <rect x="7" y="9" width="4" height="4" fill="#f25022"/><rect x="12" y="9" width="4" height="4" fill="#7fba00"/>
    <rect x="7" y="14" width="4" height="4" fill="#00a4ef"/><rect x="12" y="14" width="4" height="4" fill="#ffb900"/>
  </svg>
  <!-- outlook -->
  <svg style="left:540px;top:4px" width="36" height="32" viewBox="0 0 36 32">
    <path d="M8.5 12 L18.2 5.3 Q18.8 4.9 19.4 5.3 L29.6 10.8 V25 Q29.6 26.7 27.9 26.7 H10.2 Q8.5 26.7 8.5 25 Z" fill="#1a8fe3"/>
    <path d="M8.5 20 L29.6 14 V25 Q29.6 26.7 27.9 26.7 H10.2 Q8.5 26.7 8.5 25 Z" fill="#43cff6"/>
    <path d="M20.4 13.9 L29.6 11.2 V15.6 L20.4 19.8 Z" fill="#0b4fae"/>
    <path d="M8.5 22 V25 Q8.5 26.7 10.2 26.7 H14.5 L12 22 Z" fill="#1a8fe3"/>
    <rect x="6" y="9" width="14.4" height="13.9" rx="1" fill="#0e66cb"/>
    <ellipse cx="12.9" cy="15.9" rx="3.3" ry="3.9" stroke="#fff" stroke-width="1.5" fill="none"/>
  </svg>
  <!-- xampp -->
  <svg style="left:595px;top:8px" width="24" height="24" viewBox="0 0 16 16"><use href="#xmp"/></svg>
  <div class="a" style="left:587px;top:38px;width:40px;height:2px;background:#76b9ed"></div>
  <!-- edge -->
  <svg style="left:638px;top:4px" width="34" height="32" viewBox="0 0 34 32">
    <defs>
      <linearGradient id="eg1" x1="8" y1="6" x2="29" y2="18" gradientUnits="userSpaceOnUse"><stop offset="0" stop-color="#32c0f4"/><stop offset="0.5" stop-color="#30c6c8"/><stop offset="1" stop-color="#6ae35a"/></linearGradient>
      <linearGradient id="eg2" x1="0" y1="0" x2="0" y2="1"><stop offset="0" stop-color="#1794e0"/><stop offset="1" stop-color="#0c7ad6"/></linearGradient>
    </defs>
    <circle cx="17.9" cy="15.8" r="12.1" fill="url(#eg1)"/>
    <path d="M6.1 12.6 C8.5 9.8 16 8.6 19.4 12.2 Q20.6 14 19.6 16 Q18.6 17.8 17 18 Q18 20.3 21 20.6 Q25 21 28.1 21.7 A12.1 12.1 0 0 1 6.1 12.6 Z" fill="url(#eg2)"/>
    <path d="M13.6 20.5 Q13.6 17.2 17 17.6 Q18.4 20.4 22 20.8 Q25.5 21.1 28.1 21.7 A12.1 12.1 0 0 1 17.5 27.9 Q13.6 25 13.6 20.5 Z" fill="#0f5aa6"/>
    <circle cx="17.6" cy="15.9" r="2.1" fill="#474747"/>
  </svg>
  <!-- chrome (active) -->
  <div class="a" style="left:681px;top:0;width:48px;height:40px;background:#666666"></div>
  <svg style="left:693px;top:8px" width="24" height="24" viewBox="0 0 24 24">
    <circle cx="12" cy="12" r="5.6" fill="#fff"/>
    <path d="M1.91 5.51 A12 12 0 0 1 22.67 6.5 L12 6.5 A5.5 5.5 0 0 0 7.24 14.75 Z" fill="#e8412f"/>
    <path d="M22.67 6.5 A12 12 0 0 1 11.43 23.99 L16.76 14.75 A5.5 5.5 0 0 0 12 6.5 Z" fill="#fcc52c"/>
    <path d="M11.43 23.99 A12 12 0 0 1 1.91 5.51 L7.24 14.75 A5.5 5.5 0 0 0 16.76 14.75 Z" fill="#2e9e48"/>
    <circle cx="12" cy="12" r="5.8" fill="#fff"/>
    <circle cx="12" cy="12" r="4.7" fill="#3b7de8"/>
  </svg>
  <div class="a" style="left:681px;top:38px;width:48px;height:2px;background:#76b9ed"></div>
  <!-- vscode -->
  <svg style="left:742px;top:8px" width="24" height="24" viewBox="0 0 100 100"><path d="M96.46 10.8 L75.86 0.87 C73.48 -0.28 70.63 0.2 68.76 2.07 L1.33 63.55 C-0.48 65.2 -0.48 68.06 1.33 69.71 L6.84 74.72 C8.33 76.07 10.56 76.17 12.16 74.96 L93.38 13.35 C96.1 11.28 100 13.23 100 16.65 V16.41 C100 14 98.62 11.84 96.46 10.8 Z" fill="#1a78c8"/><path d="M96.46 89.2 L75.86 99.13 C73.48 100.28 70.63 99.8 68.76 97.93 L1.33 36.45 C-0.48 34.8 -0.48 31.94 1.33 30.29 L6.84 25.28 C8.33 23.93 10.56 23.83 12.16 25.04 L93.38 86.65 C96.1 88.72 100 86.77 100 83.35 V83.59 C100 86 98.62 88.16 96.46 89.2 Z" fill="#208ad8"/><path d="M75.86 99.13 C73.48 100.28 70.63 99.8 68.76 97.93 C71.07 100.24 75 98.6 75 95.34 V4.66 C75 1.4 71.07 -0.24 68.76 2.07 C70.63 0.2 73.48 -0.28 75.86 0.87 L96.46 10.79 C98.62 11.83 100 14 100 16.41 V83.59 C100 86 98.62 88.17 96.46 89.21 Z" fill="#35a5f0"/></svg>
  <div class="a" style="left:734px;top:38px;width:40px;height:2px;background:#76b9ed"></div>
  <!-- weather -->
  <svg style="left:933px;top:10px" width="27" height="19" viewBox="0 0 27 19">
    <defs><linearGradient id="cl" x1="0" y1="0" x2="0" y2="1"><stop offset="0" stop-color="#e6f0fb"/><stop offset="1" stop-color="#a9c8ec"/></linearGradient></defs>
    <path d="M4.5 18 Q0.5 18 0.8 14.5 Q1.2 11 5 11 Q6 5 12.5 5 Q19 5 20 10.5 Q25 10.5 25 14.5 Q25 18 21 18 Z" fill="url(#cl)"/>
    <circle cx="19" cy="6" r="5.8" fill="#d9302a"/>
    <path d="M17.8 4.2 L19.5 3.2 V9" stroke="#fff" stroke-width="1.3" fill="none"/>
  </svg>
  <div class="a" style="left:966px;top:11px;font-size:14px;line-height:18px;color:#fff;white-space:nowrap;letter-spacing:-0.2px">27°C</div>
  <div class="a" style="left:1004px;top:11px;font-size:14px;line-height:18px;color:#fff;white-space:nowrap;letter-spacing:-0.45px">Berawan</div>
  <svg style="left:1080px;top:16px" width="14" height="8"><path d="M1 7 L7 1 L13 7" stroke="#fff" stroke-width="1.1" fill="none"/></svg>
  <!-- meet now -->
  <svg style="left:1105px;top:11px" width="13" height="17" viewBox="0 0 13 17"><path d="M3 1.5 Q6 0.5 9 1.5 M3 15.5 Q6 16.5 9 15.5" stroke="#fff" stroke-width="1" fill="none"/><rect x="1" y="5" width="7.5" height="7" rx="1.2" stroke="#fff" stroke-width="1.1" fill="none"/><path d="M8.5 7.5 L12 5.5 V11.5 L8.5 9.5" stroke="#fff" stroke-width="1.1" fill="none"/></svg>
  <!-- onedrive -->
  <svg style="left:1126px;top:14px" width="18" height="11" viewBox="0 0 18 11"><path d="M3 10.5 Q0 10.5 0.3 7.5 Q0.8 5 3.5 5.2 Q4.5 1 9 1 Q12.5 1 13.7 4 Q17.8 4 17.8 7.5 Q17.8 10.5 14.5 10.5 Z" fill="#d8d8d8"/><path d="M3 10.5 Q0 10.5 0.3 7.5 H17.8 Q17.8 10.5 14.5 10.5 Z" fill="#f4f4f4"/></svg>
  <!-- sync display -->
  <svg style="left:1150px;top:11px" width="18" height="17" viewBox="0 0 18 17"><path d="M1 2.5 L16 0.8 V14.5 L1 13.5 Z" stroke="#fff" stroke-width="1.1" fill="none"/><path d="M6 6.5 Q7 4.5 10 4.5 M10 4.5 L9 3.3 M10.5 9.5 Q9.5 11 7 11 M7 11 L8 12.2" stroke="#fff" stroke-width="1" fill="none"/><circle cx="13.4" cy="13.4" r="3.6" fill="#f7a10b"/></svg>
  <!-- battery -->
  <svg style="left:1175px;top:15px" width="17" height="10" viewBox="0 0 17 10"><rect x="0.6" y="0.6" width="14" height="8.6" stroke="#fff" stroke-width="1.1" fill="none"/><rect x="2.3" y="2.3" width="5" height="5.2" fill="#fff"/><rect x="15" y="3" width="1.6" height="3.6" fill="#fff"/></svg>
  <!-- wifi -->
  <svg style="left:1201px;top:14px" width="15" height="14" viewBox="0 0 15 14"><path d="M0.8 13 A13 13 0 0 1 13.5 0.8 M3.5 13 A10 10 0 0 1 13.5 3.8 M6.3 13 A7 7 0 0 1 13.5 6.8 M9 13 A4.5 4.5 0 0 1 13.5 9.5" stroke="#fff" stroke-width="1" fill="none"/><circle cx="12.8" cy="12" r="1.3" fill="#fff"/></svg>
  <!-- volume -->
  <svg style="left:1222px;top:13px" width="18" height="15" viewBox="0 0 18 15"><path d="M0.8 5 H3.5 L8 1 V14 L3.5 10 H0.8 Z" stroke="#fff" stroke-width="1.1" fill="none" stroke-linejoin="round"/><path d="M10.5 5 Q12 7.5 10.5 10 M12.8 3 Q15.5 7.5 12.8 12 M15 1 Q19 7.5 15 14" stroke="#fff" stroke-width="1.1" fill="none"/></svg>
  <!-- clock -->
  <div class="a" style="left:1240px;top:4px;width:76px;text-align:center;font-size:12px;line-height:15px;color:#fff">5:24</div>
  <div class="a" style="left:1240px;top:22px;width:76px;text-align:center;font-size:12px;line-height:15px;color:#fff">20/11/2024</div>
  <!-- notifications -->
  <svg style="left:1324px;top:11px" width="26" height="23" viewBox="0 0 26 23">
    <path d="M1 1 H17 V14 H7 L5 16.5 V14 H1 Z" fill="#fff"/>
    <path d="M4 4.5 H14 M4 7.5 H14 M4 10.5 H11" stroke="#3b3b3b" stroke-width="1"/>
    <circle cx="16.5" cy="16" r="7.3" fill="#3b3b3b" stroke="#9a9a9a" stroke-width="1"/>
    <path d="M15.2 13.5 L17.2 12 V20" stroke="#fff" stroke-width="1.6" fill="none"/>
  </svg>
  <div class="a" style="left:1361px;top:0;width:1px;height:40px;background:#8a8a8a"></div>
</div>
</body></html>
